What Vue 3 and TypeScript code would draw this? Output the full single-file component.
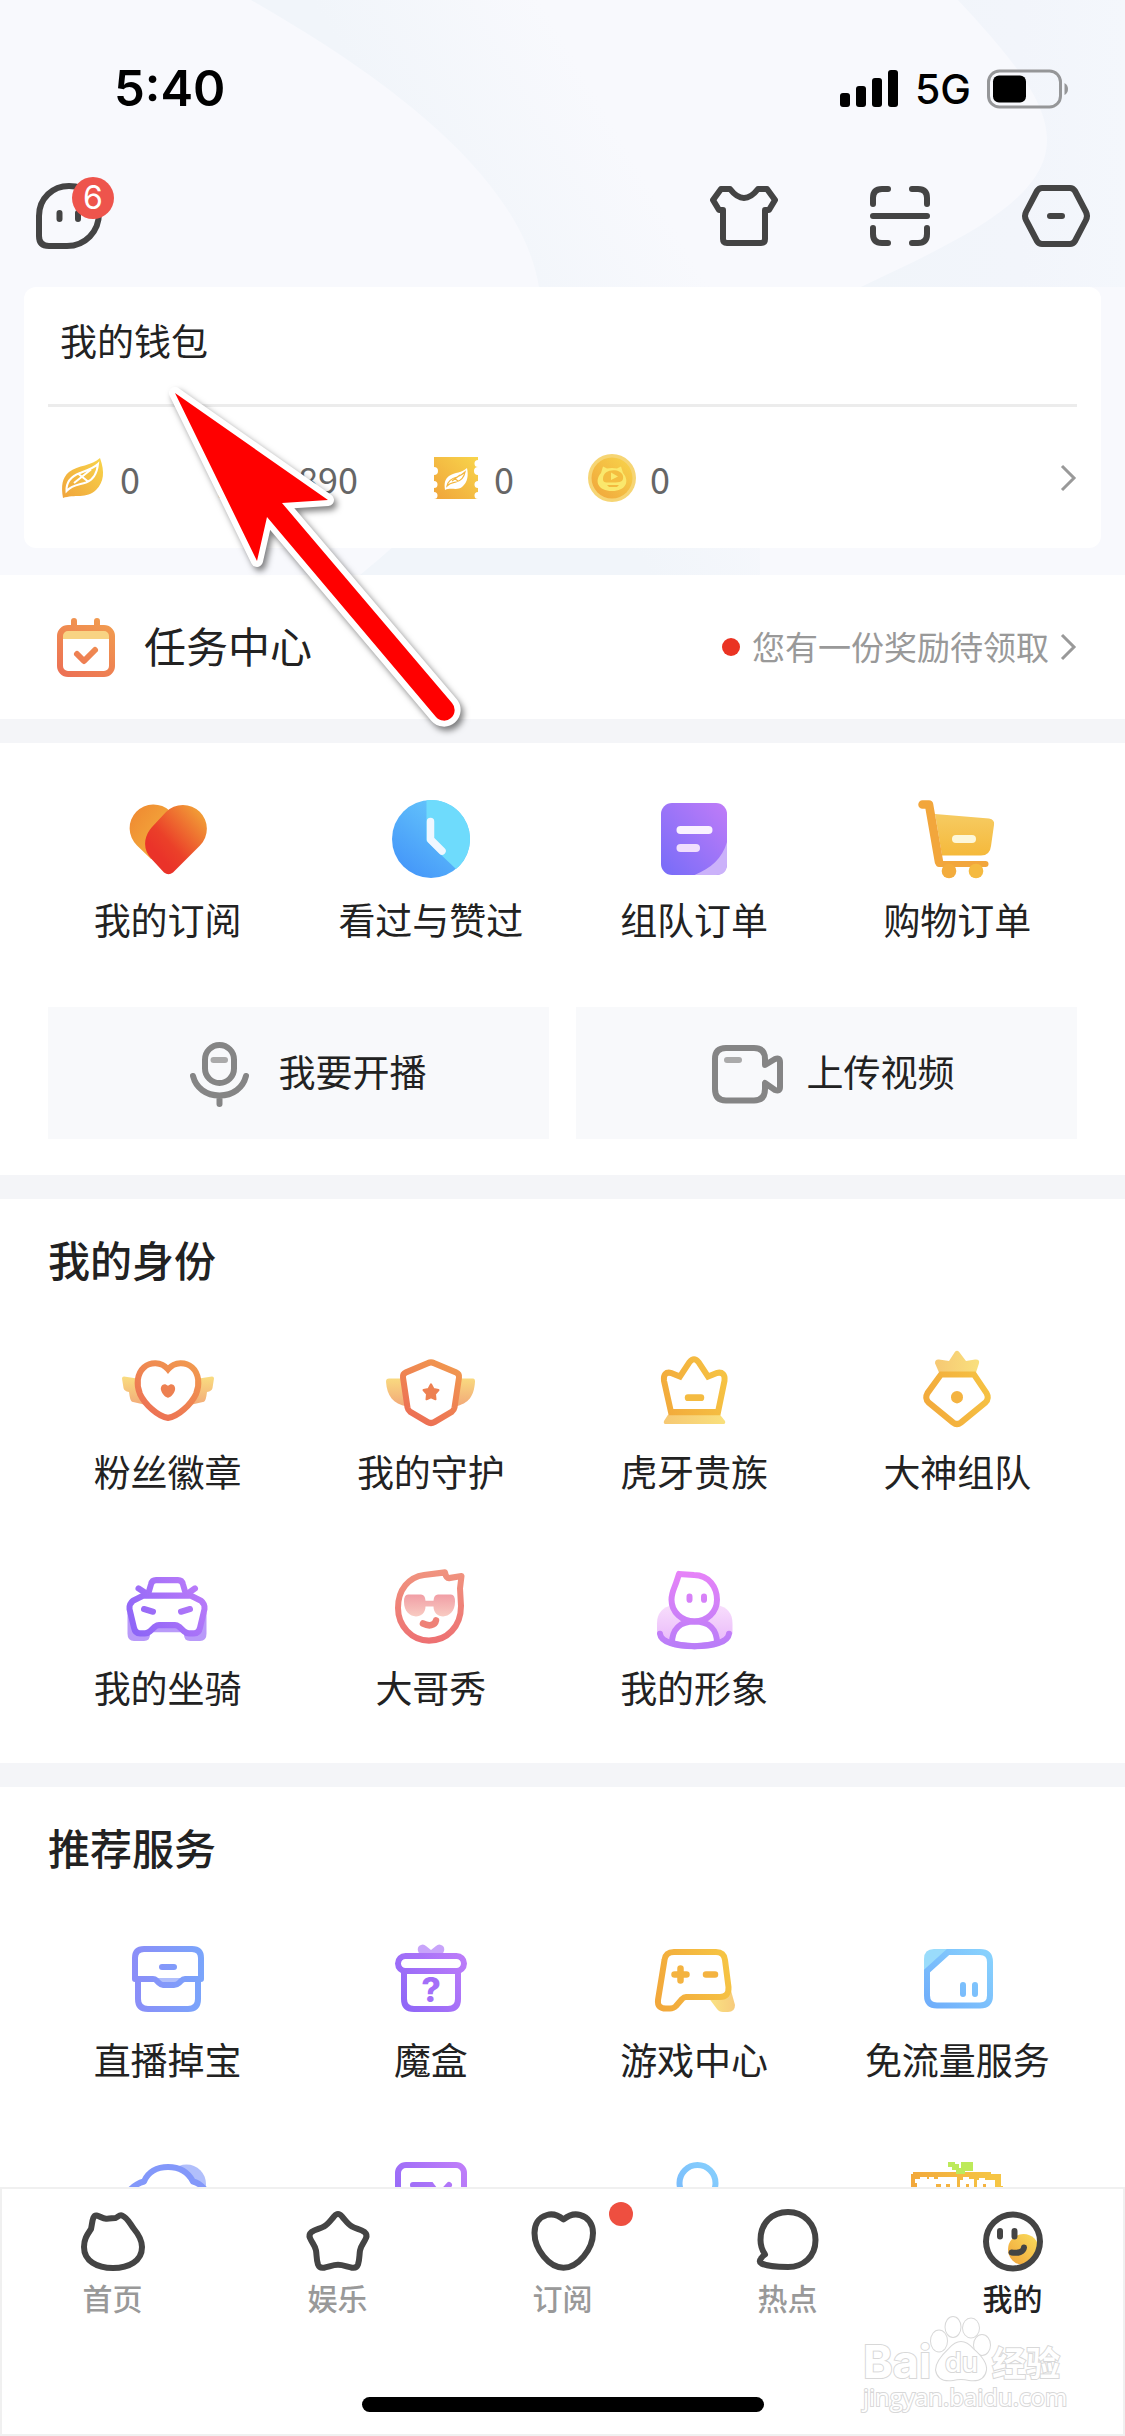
<script setup lang="ts">
interface Entry {
  label?: string
  icon: string
}

interface Balance {
  value: string
  icon: string
  wide?: boolean
}

interface Tab {
  label: string
  icon: string
  dot?: boolean
  active?: boolean
}

const leaf =
  '<path d="M42 4 C47 18 46 28 38 36 C29 45 16 40 5 44 C3 32 4 24 11 18 C20 11 34 12 42 4Z" fill="url(#g-gold)"/><path d="M8.500 37 C8 27 14 22 22 19 C30 16 36 14 40 10 C39 20 35 26 28 28.500 C20 31 14 31 8.500 37Z M16 29 L33 15.500 M20 19.500 L30 27.500" fill="none" stroke="#fff" stroke-width="2"/>'

const balances: Balance[] = [
  { value: '0', icon: leaf },
  { value: '890', icon: leaf, wide: true },
  {
    value: '0',
    icon: '<path d="M2 3 H46 V6 A3.500 3.500 0 0 0 46 13 A3.500 3.500 0 0 0 46 21 V27 A3.500 3.500 0 0 0 46 34 V38 A3.500 3.500 0 0 0 46 45 H2 A3.500 3.500 0 0 0 2 38 V34 A3.500 3.500 0 0 0 2 27 V21 A3.500 3.500 0 0 0 2 13 V6Z" fill="url(#g-gold)"/><path d="M35 14 C36.500 21 36 28 30 33 C25 37 19 33 13 36 C12 29 13 25 17 22 C23 18 30 19 35 14Z" fill="#fff"/><path d="M15 32 C16 27 21 24 25 23 C29 21.500 31 20 33 18 C32 24 28 27 24 28 C20 29 18 29 15 32Z M20 27 L28 21 M22 24 L26 27" fill="none" stroke="#f3b63e" stroke-width="1.200"/>'
  },
  {
    value: '0',
    icon: '<circle cx="24" cy="24" r="24" fill="#f6d574"/><circle cx="24" cy="24" r="20.500" fill="url(#g-gold)"/><path d="M15 12.500 L19 14.500 Q24 13.500 29 14.500 L33 12.500 L35 19 C42 27 38 37 24 37 C10 37 6 27 13 19Z" fill="#fae86c"/><path d="M15 25 C15 14 33 14 35 22 C36 28 32 28.500 25 28.500 C18 28.500 15 29 15 25Z" fill="#f4bd40"/><path d="M23 18.500 L30 22.500 L23 26Z" fill="#fae86c"/><path d="M19 31 H31 L29 33 H21Z" fill="#f3b93e"/>'
  }
]

const shortcuts: Entry[] = [
  {
    label: '我的订阅',
    icon: '<path d="M17 54.500 A23.500 23.500 0 0 1 50 20 L50 60 L31 68Z" fill="url(#g-petal)"/><path d="M46 21 A23.500 23.500 0 0 1 80 54.500 L53 81.500 Q48.500 85 44 81.500 L31.500 68 C24 60 22.500 49 30 38.500 Q31 37 46 21Z" fill="url(#g-heart)"/>'
  },
  {
    label: '看过与赞过',
    icon: '<circle cx="48" cy="48" r="39" fill="url(#g-clock)"/><path d="M43.500 9.300 V50 L73 78 A39 39 0 0 0 43.500 9.300Z" fill="#6edbfc"/><path d="M47.500 30.500 V48.500 L59 60" fill="none" stroke="#f0f7ff" stroke-width="7.500" stroke-linecap="round" stroke-linejoin="round"/>'
  },
  {
    label: '组队订单',
    icon: '<rect x="15" y="12" width="66" height="72" rx="11" fill="url(#g-doc)"/><path d="M81 51 C76 68 65 77 48.500 84 H70 Q81 84 81 73Z" fill="#cbb2fa"/><rect x="30.500" y="35" width="36" height="8" rx="4" fill="#faf2ff"/><rect x="30.500" y="53" width="23.500" height="8" rx="4" fill="#f0defd"/>'
  },
  {
    label: '购物订单',
    icon: '<path d="M26 23 L80 27.500 Q86 28.500 85 34 L82 55 Q81 64.500 72 64.500 H33Z" fill="url(#g-basket)"/><g fill="none" stroke="#f2a63c" stroke-linecap="round" stroke-linejoin="round"><path d="M13.500 13.500 H20 L30 71" stroke-width="8.500"/><path d="M30 73 H76.500" stroke-width="6"/></g><circle cx="40" cy="80" r="7.300" fill="#f3ac3d"/><circle cx="67" cy="80" r="7.300" fill="#f5ba40"/><rect x="43" y="44" width="24" height="8" rx="4" fill="#fdf7d8"/>'
  }
]

const identities: Entry[] = [
  {
    label: '粉丝徽章',
    icon: '<path d="M4 37 L17 39 L24 64 L12 61.500 Q10 60.500 9 52 Q4 51 3.500 48 L2 39 Q2 37 4 37Z M92 37 L79 39 L72 64 L84 61.500 Q86 60.500 87 52 Q92 51 92.500 48 L94 39 Q94 37 92 37Z" fill="url(#g-wing)"/><path d="M48 30 C41 22 30 23 24 28 C17 34 16 45 20 54 C25 64 38 76 48 77 C58 76 71 64 76 54 C80 45 79 34 72 28 C66 23 55 22 48 30Z" fill="#fff" stroke="url(#g-orange)" stroke-width="6"/><path d="M48 46 C44 42 40 46 41 50 C42 54 46 57.500 48 57.500 C50 57.500 54 54 55 50 C56 46 52 42 48 46Z" fill="#ed8051"/>'
  },
  {
    label: '我的守护',
    icon: '<path d="M6 39 H20 L24 66 C10 63 4 56 3 42 Q3 39 6 39Z M90 39 H76 L72 66 C86 63 91 56 92 42 Q92 39 90 39Z" fill="url(#g-wing)"/><path d="M45 24 Q48 22.500 51 24 L73 33 Q76.500 34.500 76 38 L71.500 67 Q71 69.500 69 71 L51.500 81 Q48 83 44.500 81 L27 71 Q25 69.500 24.500 67 L20 38 Q19.500 34.500 23 33Z" fill="#fff" stroke="url(#g-orange)" stroke-width="6"/><path d="M48 44.500 L50.500 49 L55.500 50 L52 54 L52.500 59 L48 57 L43.500 59 L44 54 L40.500 50 L45.500 49Z" fill="#ed8051" stroke="#ed8051" stroke-width="2" stroke-linejoin="round"/>'
  },
  {
    label: '虎牙贵族',
    icon: '<path d="M22 74 H74 L79 80 Q80 83 77 83 H20 Q17 83 18 80Z" fill="url(#g-lemon)"/><path d="M25 71.500 L18 41 Q17 32 25 33.500 L34 37 L43.500 23 Q48 17.500 52.500 23 L62 37 L71 33.500 Q79.500 32 78.500 41 L72 71.500Z" fill="none" stroke="url(#g-yellow)" stroke-width="6"/><path d="M42 57.500 H55" stroke="#f4bb41" stroke-width="6.500" stroke-linecap="round"/>'
  },
  {
    label: '大神组队',
    icon: '<path d="M30 33 L26 24 Q26 20 30 20.500 L40 22 L46 13 Q48 11 50 13 L57 22 L66 20.500 Q71 20 70 24 L67 33Z" fill="url(#g-lemon)"/><path d="M32 35 H65 L77.500 53 Q80.500 58 76.500 62 L52 81.500 Q48 84.500 44 81.500 L19.500 62 Q15.500 58 18.500 53Z" fill="none" stroke="url(#g-yellow)" stroke-width="6"/><circle cx="48" cy="57" r="6" fill="#f4b340"/>'
  },
  {
    label: '我的坐骑',
    icon: '<path d="M7.500 56 L30 74 V78 Q30 84 24 84 H14 Q7.500 84 7.500 77Z M86.500 56 L64 74 V78 Q64 84 70 84 H80 Q86.500 84 86.500 77Z M32 70 H62 V75.500 H32Z" fill="#b99af9"/><g stroke="url(#g-purple)" stroke-width="6" stroke-linecap="round" stroke-linejoin="round" fill="none"><path d="M28 39 L31 29 Q32 25 36 25 H58 Q62 25 63 29 L66 39"/><path d="M18.500 33 L25 37 M75 33 L69 37"/><path d="M23 40 H71 L81 45 Q85 48 84.500 53 L80 71 Q79 76.500 74 76.500 H69 Q66 76.500 64 74.500 L59 70 Q57 68.500 55 68.500 H39 Q37 68.500 35 70 L30 74.500 Q28 76.500 25 76.500 H20 Q15 76.500 14 71 L9.500 53 Q9 48 13 45Z" fill="#fff"/><path d="M24 53 L33 55.500 M70 53 L61 55.500"/></g>'
  },
  {
    label: '大哥秀',
    icon: '<path d="M46 83.500 C29 83.500 15 69.500 15 52 C15 34 26 22 41 20 L62 17.500 Q63 23 66 23 L78.500 21 L77 33 L78 50 C78 70 64 83.500 46 83.500Z" fill="none" stroke="url(#g-coral)" stroke-width="6" stroke-linejoin="round"/><path d="M25 39 H38 Q42 39 42.500 45 H50.500 Q51 39 55 39 H68 Q72 39 72 46 C72 64 50.500 64 50.500 50.500 H42.500 C42.500 64 21 64 21 46 Q21 39 25 39Z" fill="url(#g-shades)"/><path d="M40 67 C46 70 52 69 53 64" fill="none" stroke="#ee8177" stroke-width="6.500" stroke-linecap="round"/>'
  },
  {
    label: '我的形象',
    icon: '<path d="M27 49 H71 Q86.500 52 86.500 67 V77 L72 86 H25 L11 77 V67 Q11 52 27 49Z" fill="url(#g-haze)"/><g fill="#fff" stroke="url(#g-pink)" stroke-width="6" stroke-linejoin="round" stroke-linecap="round"><path d="M26 86 C26 73 34 65 48.500 65 C63 65 71 73 71 86 Q48.500 92 26 86Z"/><path d="M14 77 C15 85 30 89 48.500 89 C67 89 82 85 83 77" fill="none"/><path d="M33 19 L48 20 C63 20 71 32 71 44 C71 56 61 65 48.500 65 C36 65 25.500 56 25.500 44 C25.500 36 29 32 31 25Z"/><path d="M43.500 41 V44 M58 41 V44"/></g>'
  }
]

const services: Entry[] = [
  {
    label: '直播掉宝',
    icon: '<path d="M32 47 H65 L58 54 H40Z" fill="#b1bffb"/><g fill="none" stroke="url(#g-indigo)" stroke-width="6" stroke-linejoin="round" stroke-linecap="round"><path d="M15 48 V27 Q15 18 24 18 H72 Q81 18 81 27 V48 H65 Q63 48 61 50 L59 52 Q57 54 54 54 H43 Q41 54 39 52 L36 49 Q35 48 33 48Z"/><path d="M18 48 V68 Q18 78 28 78 H68 Q78 78 78 68 V48"/><path d="M42 36 H54"/></g>'
  },
  {
    label: '魔盒',
    icon: '<path d="M37 24 Q33 18 36 15 Q40 12 43 15 L48 19 L53 15 Q56 12 60 15 Q63 18 59 24Z" fill="#c8a4fa"/><g fill="none" stroke="url(#g-purple)" stroke-width="6"><rect x="15" y="25" width="66" height="15" rx="7.500"/><path d="M21 41 V68 Q21 78 31 78 H65 Q75 78 75 68 V41"/></g><text x="48" y="71" text-anchor="middle" font-family="Inter, sans-serif" font-weight="800" font-size="34" fill="#a36ff8">?</text>'
  },
  {
    label: '游戏中心',
    icon: '<path d="M62 66 L84 56 L89 74 Q89 81 82 81 H77 Q73 81 71 78Z" fill="url(#g-lemon-r)"/><path d="M28 21 H70 Q78 21 79 29 L82.500 56 Q83 66 74 66 H40 Q38 66 36 68 L30 75 Q27.500 77.500 24 77.500 H20 Q11 77.500 12 69 L18.500 29 Q19.500 21 28 21Z" fill="#fff" stroke="url(#g-yellow)" stroke-width="6"/><path d="M28.500 43.500 H40.500 M34.500 37.500 V49.500 M60 43.500 H69" stroke="#f4b340" stroke-width="6.500" stroke-linecap="round"/>'
  },
  {
    label: '免流量服务',
    icon: '<path d="M15 42 V28 Q15 18 25 18 H42Z" fill="#9adcfb"/><g fill="none" stroke="url(#g-sky)" stroke-width="6" stroke-linecap="round"><path d="M39 21 H71 Q81 21 81 31 V64.500 Q81 74.500 71 74.500 H28 Q18 74.500 18 64.500 V40Z"/><path d="M54 54 V63 M66 54 V63"/></g>'
  },
  {
    icon: '<circle cx="66.500" cy="37" r="19.500" fill="#b1bffb"/><path d="M8 45 Q15 37 24 34.500 C28 25 37 20 48 20 C59 20 68 25 73 34.500 Q80 36 87 45" fill="#fff" stroke="#8398fa" stroke-width="6" stroke-linejoin="round"/>'
  },
  {
    icon: '<g fill="none" stroke="url(#g-purple)" stroke-width="6" stroke-linecap="round"><rect x="15" y="18" width="66" height="52" rx="8"/><path d="M30 38 H48 L54 46 M66 38 L58 47"/></g>'
  },
  {
    icon: '<circle cx="51.500" cy="36" r="18" fill="none" stroke="url(#g-sky)" stroke-width="6"/>'
  },
  {
    icon: '<path d="M4 25 H82 V27 H92 V39 H94 V53 H2 V27 H4Z" fill="url(#g-yellow)"/><path d="M8 53 V36 H6 V32 H11 V30 H18 V32 H20 V30 H25 V32 H29 V30 H48 V53Z M51 53 V33 H54 V30 H60 V32 H65 V53Z M68 53 V33 H70 V31 H76 V33 H86 V53Z" fill="#fff"/><path d="M27 37 H32 V43 H27Z M37 37 H41 V43 H37Z M57 37 H60 V43 H57Z M74 37 H77 V43 H74Z" fill="#f4b340"/><path d="M39 15 H46 V17 H50 V21 H52 V15 H64 V24 H56 V27 H47 V23 H43 V20 H39Z" fill="#bdea5a"/>'
  }
]

const tabs: Tab[] = [
  {
    label: '首页',
    icon: '<path d="M14 24 C15.500 17 15.500 10 19.500 10.500 C22 11 26 13.500 29 13.700 C32 14 36 13 38.500 13 C41 12 42.500 9.500 45 10.500 C51 13 53 19 57 24 C62 30 65 35 65 42 C65 56 52 63 36 63 C20 63 7 56 7 42 C7 34 10 30 14 24Z"/>'
  },
  {
    label: '娱乐',
    icon: '<path d="M32 11.500 Q36 6.500 40 11.500 C44 16 46 19.500 50 21.500 C54 24 58 24 62.500 27 Q65.500 29.500 64 33 C62 38 59 40 58 45.500 C57.200 50 57.800 54 56 59.500 Q54.500 63.500 50 62.700 C45 61.800 41 59.800 36 59.800 C31 59.800 27 61.800 22 62.700 Q17.500 63.500 16 59.500 C14.200 54 14.800 50 14 45.500 C13 40 10 38 8 33 Q6.500 29.500 9.500 27 C14 24 18 24 22 21.500 C26 19.500 28 16 32 11.500Z"/>'
  },
  {
    label: '订阅',
    dot: true,
    icon: '<path d="M36.500 14.500 C31 10 25 8.500 20 10 C11 12.500 7.500 20 7.500 28 C7.500 44 22 62.700 36.500 62.700 C51 62.700 66 44 66 28 C66 20 62 12.500 53 10 C48 8.500 42 10 36.500 14.500Z"/>'
  },
  {
    label: '热点',
    icon: '<path d="M13 49.500 C10 45 8.500 40 8.500 35 C8.500 18 20 7 36 7 C52 7 63.500 19 63.500 35 C63.500 52 51 62 36 62 C27 62 15 61.500 9.500 58.500 C7 57 7.500 55.500 9 53.500 Q10.500 51 13 49.500Z"/>'
  },
  {
    label: '我的',
    active: true,
    icon: '<circle cx="46.500" cy="44.500" r="15.500" fill="url(#g-cheek)" stroke="none"/><path fill-rule="evenodd" d="M0 0 H72 V72 H0Z M36 9.500 A27 27 0 1 0 36 63.500 A27 27 0 1 0 36 9.500Z" fill="#fff" stroke="none"/><circle cx="36" cy="36.500" r="27"/><path d="M23 26 V31.500 M37.500 26 V31.500 M34.500 47.500 C41 48.500 46.500 47 47 42.500"/>'
  }
]
</script>

<template>
  <div class="page">
    <svg class="defs" width="0" height="0" aria-hidden="true">
      <defs>
        <linearGradient id="g-gold" x1="0" y1="1" x2="1" y2="0"><stop offset="0" stop-color="#f0a43b" /><stop offset="1" stop-color="#f8d54b" /></linearGradient>
        <linearGradient id="g-petal" x1="0" y1="0" x2="1" y2="1"><stop offset="0" stop-color="#ef8630" /><stop offset="1" stop-color="#f4b640" /></linearGradient>
        <linearGradient id="g-heart" x1=".3" y1=".8" x2="1" y2="0.1"><stop offset="0" stop-color="#ea3329" /><stop offset=".25" stop-color="#eb4029" /><stop offset="1" stop-color="#f2a838" /></linearGradient>
        <linearGradient id="g-clock" x1="0" y1="1" x2=".8" y2="0"><stop offset="0" stop-color="#3f8ff9" /><stop offset="1" stop-color="#69ccfb" /></linearGradient>
        <linearGradient id="g-doc" x1="0" y1="1" x2="1" y2="0"><stop offset="0" stop-color="#766cf8" /><stop offset="1" stop-color="#c07cf8" /></linearGradient>
        <linearGradient id="g-basket" x1="0" y1="0" x2="0" y2="1"><stop offset="0" stop-color="#f6cb62" /><stop offset="1" stop-color="#f5b93b" /></linearGradient>
        <linearGradient id="g-wing" gradientUnits="userSpaceOnUse" x1="0" y1="38" x2="0" y2="66"><stop offset="0" stop-color="#f9db80" /><stop offset="1" stop-color="#f2a878" /></linearGradient>
        <linearGradient id="g-orange" gradientUnits="userSpaceOnUse" x1="30" y1="80" x2="66" y2="20"><stop offset="0" stop-color="#ec6e55" /><stop offset="1" stop-color="#f1994f" /></linearGradient>
        <linearGradient id="g-yellow" gradientUnits="userSpaceOnUse" x1="10" y1="60" x2="86" y2="36"><stop offset="0" stop-color="#f2a83b" /><stop offset="1" stop-color="#f6c544" /></linearGradient>
        <linearGradient id="g-lemon" x1="0" y1="0" x2="1" y2="0"><stop offset="0" stop-color="#f6c873" /><stop offset="1" stop-color="#f9e07d" /></linearGradient>
        <linearGradient id="g-lemon-r" x1="0" y1="0" x2="1" y2="0"><stop offset="0" stop-color="#fae483" /><stop offset="1" stop-color="#f7cb7c" /></linearGradient>
        <linearGradient id="g-purple" gradientUnits="userSpaceOnUse" x1="12" y1="80" x2="84" y2="24"><stop offset="0" stop-color="#8a64f7" /><stop offset="1" stop-color="#be7df9" /></linearGradient>
        <linearGradient id="g-coral" gradientUnits="userSpaceOnUse" x1="0" y1="15" x2="0" y2="86"><stop offset="0" stop-color="#f0947f" /><stop offset="1" stop-color="#ed7072" /></linearGradient>
        <linearGradient id="g-shades" x1="0" y1="0" x2="0" y2="1"><stop offset="0" stop-color="#f19ea5" /><stop offset="1" stop-color="#f8cbc2" /></linearGradient>
        <linearGradient id="g-haze" x1="0" y1="0" x2="0" y2="1"><stop offset="0" stop-color="#f8defc" /><stop offset="1" stop-color="#e9b9fa" /></linearGradient>
        <linearGradient id="g-pink" gradientUnits="userSpaceOnUse" x1="0" y1="16" x2="0" y2="90"><stop offset="0" stop-color="#e783f8" /><stop offset="1" stop-color="#b97df8" /></linearGradient>
        <linearGradient id="g-indigo" gradientUnits="userSpaceOnUse" x1="12" y1="0" x2="84" y2="0"><stop offset="0" stop-color="#8b8df8" /><stop offset="1" stop-color="#7aa5fb" /></linearGradient>
        <linearGradient id="g-sky" gradientUnits="userSpaceOnUse" x1="20" y1="78" x2="76" y2="20"><stop offset="0" stop-color="#6fadfb" /><stop offset="1" stop-color="#88d1fd" /></linearGradient>
        <linearGradient id="g-cheek" x1="0" y1="1" x2="1" y2="0"><stop offset="0" stop-color="#f0a23a" /><stop offset="1" stop-color="#fadf5c" /></linearGradient>
        <linearGradient id="g-band" gradientUnits="userSpaceOnUse" x1="400" y1="150" x2="570" y2="50"><stop offset="0" stop-color="#f1f5fa" /><stop offset="1" stop-color="#f1f5fa" stop-opacity="0" /></linearGradient>
        <linearGradient id="g-band-r" x1="0" y1="0" x2="1" y2="0"><stop offset="0" stop-color="#f1f5fa" /><stop offset=".6" stop-color="#f2f5fb" /><stop offset="1" stop-color="#f4f7fc" /></linearGradient>
      </defs>
    </svg>

    <main class="content">
      <header class="top">
        <svg class="backdrop" viewBox="0 0 1125 575" preserveAspectRatio="none" aria-hidden="true">
          <path d="M251 0 C370 68 520 170 539 287 Q550 420 360 575 H760 V0Z" fill="url(#g-band)" />
          <path d="M958 0 C1010 56 1047 100 1047 140 C1047 200 960 240 861 287 H1125 V0Z" fill="url(#g-band-r)" />
        </svg>

        <div class="status">
          <span class="time">5:40</span>
          <div class="signals">
            <svg width="60" height="40" viewBox="0 0 60 40" aria-hidden="true">
              <rect x="1" y="24" width="10" height="14" rx="3" /><rect x="17" y="17" width="10" height="21" rx="3" />
              <rect x="33" y="9" width="10" height="29" rx="3" /><rect x="49" y="1" width="10" height="37" rx="3" />
            </svg>
            <span class="network">5G</span>
            <svg width="82" height="40" viewBox="0 0 82 40" aria-hidden="true">
              <rect x="1.500" y="2" width="72" height="36" rx="11" fill="none" stroke="#959698" stroke-width="3" />
              <rect x="6" y="6.500" width="33" height="27" rx="6" />
              <path d="M77.500 14 Q81 16 81 20 Q81 24 77.500 26Z" fill="#959698" />
            </svg>
          </div>
        </div>

        <div class="toolbar">
          <button type="button" class="tool">
            <svg class="line" viewBox="0 0 72 72"><path d="M6 36 C6 18 20 6 36 6 C54 6 66 18 66 33 C66 52 52 66 34 66 H16 Q6 66 6 56Z M26.500 33 V39 M45 33 V39" /></svg>
            <span class="badge">6</span>
          </button>
          <div class="tools">
            <button type="button" class="tool"><svg class="line" viewBox="0 0 72 72"><path d="M13 9 H22 Q29 18 36 18 Q43 18 50 9 H59 L67 20 L61 30 H57 V59 Q57 63 53 63 H19 Q15 63 15 59 V30 H11 L5 20Z" /></svg></button>
            <button type="button" class="tool"><svg class="line" viewBox="0 0 72 72"><path d="M9 24 V18 Q9 9 18 9 H24 M48 9 H54 Q63 9 63 18 V24 M63 48 V54 Q63 63 54 63 H48 M24 63 H18 Q9 63 9 54 V48 M9 36 H63" /></svg></button>
            <button type="button" class="tool"><svg class="line" viewBox="0 0 72 72"><path d="M22 8 H50 Q53 8 55 11 L66 32 Q68 36 66 40 L55 61 Q53 64 50 64 H22 Q19 64 17 61 L6 40 Q4 36 6 32 L17 11 Q19 8 22 8Z M30 36 H42" /></svg></button>
          </div>
        </div>

        <section class="wallet">
          <h2 class="wallet-title">我的钱包</h2>
          <a class="balances" href="#wallet">
            <span v-for="(b, i) in balances" :key="i" class="balance">
              <svg width="48" height="48" viewBox="0 0 48 48" aria-hidden="true" v-html="b.icon"></svg>
              <span class="amount" :class="{ wide: b.wide }">{{ b.value }}</span>
            </span>
            <svg class="chevron" width="18" height="30" viewBox="0 0 18 30"><path d="M3 3 L15 15 L3 27" /></svg>
          </a>
        </section>
      </header>

      <a class="task" href="#tasks">
        <svg width="72" height="72" viewBox="0 0 72 72" aria-hidden="true">
          <rect x="12" y="19" width="48" height="9" fill="#f8d383" />
          <g fill="none" stroke="url(#g-orange)" stroke-width="6" stroke-linecap="round" stroke-linejoin="round">
            <rect x="10" y="17" width="52" height="46" rx="8" />
            <path d="M24 10 V16 M47 10 V16 M27 43 L34 50 L45 39" />
          </g>
        </svg>
        <span class="task-name">任务中心</span>
        <span class="dot"></span>
        <span class="task-note">您有一份奖励待领取</span>
        <svg class="chevron" width="18" height="30" viewBox="0 0 18 30"><path d="M3 3 L15 15 L3 27" /></svg>
      </a>

      <section class="panel main-entries">
        <div class="grid">
          <a v-for="s in shortcuts" :key="s.label" class="entry" href="#entry">
            <svg width="96" height="96" viewBox="0 0 96 96" aria-hidden="true" v-html="s.icon"></svg>
            <span>{{ s.label }}</span>
          </a>
        </div>
        <div class="actions">
          <button type="button" class="action">
            <svg width="84" height="84" viewBox="0 0 84 84" aria-hidden="true">
              <g fill="none" stroke="#858585" stroke-width="6" stroke-linecap="round">
                <rect x="28" y="14" width="29" height="38" rx="14.500" />
                <path d="M16 45 C19 57 29 64.500 42.500 64.500 C56 64.500 66 57 69 45 M42.500 65 V73" />
                <path d="M36.500 29 H48" stroke="#aaa" />
              </g>
            </svg>
            <span>我要开播</span>
          </button>
          <button type="button" class="action">
            <svg width="84" height="84" viewBox="0 0 84 84" aria-hidden="true">
              <g fill="none" stroke="#858585" stroke-width="6" stroke-linecap="round" stroke-linejoin="round">
                <path d="M60 34 L70 28 Q75 26 75 31 V56 Q75 61 70 59 L60 52 V58 Q60 69.500 49 69.500 H21 Q10 69.500 10 58 V28 Q10 17 21 17 H49 Q60 17 60 28Z" />
                <path d="M22 29 H34" stroke="#aaa" />
              </g>
            </svg>
            <span>上传视频</span>
          </button>
        </div>
      </section>

      <section class="panel">
        <h2 class="panel-title">我的身份</h2>
        <div class="grid">
          <a v-for="s in identities" :key="s.label" class="entry" href="#entry">
            <svg width="96" height="96" viewBox="0 4.500 96 93" preserveAspectRatio="none" aria-hidden="true" v-html="s.icon"></svg>
            <span>{{ s.label }}</span>
          </a>
        </div>
      </section>

      <section class="panel">
        <h2 class="panel-title">推荐服务</h2>
        <div class="grid">
          <a v-for="(s, i) in services" :key="i" class="entry" href="#entry">
            <svg width="96" height="96" viewBox="0 0 96 96" aria-hidden="true" v-html="s.icon"></svg>
            <span v-if="s.label">{{ s.label }}</span>
          </a>
        </div>
      </section>
    </main>

    <nav class="tabbar">
      <div class="tabs">
        <a v-for="t in tabs" :key="t.label" class="tab" :class="{ active: t.active }" href="#tab">
          <svg class="line" viewBox="0 0 72 72" aria-hidden="true" v-html="t.icon"></svg>
          <span>{{ t.label }}</span>
          <i v-if="t.dot" class="tab-dot"></i>
        </a>
      </div>
      <div class="home-bar"></div>

      <svg class="watermark" width="216" height="110" viewBox="0 0 216 110">
        <g fill="#fff" stroke="#d8d8d8" stroke-width="2" paint-order="stroke">
          <text x="8" y="60" font-size="45" font-weight="700" font-family="Inter, sans-serif">Bai</text>
          <ellipse cx="84" cy="23" rx="8" ry="10.500" /><ellipse cx="98" cy="9" rx="7.500" ry="10" />
          <ellipse cx="116" cy="10" rx="8" ry="9.500" /><ellipse cx="127" cy="27" rx="8" ry="10" />
          <path d="M94 31 Q106 17 118 31 Q132 43 131 52 Q129 64 114 62 Q106 60 98 62 Q83 64 81 52 Q81 43 94 31Z" />
          <text x="90" y="54" font-size="27" font-weight="500" font-family="Inter, sans-serif">du</text>
          <text x="137" y="58" font-size="34" font-weight="700" font-family="'Noto Sans CJK SC', sans-serif">经验</text>
          <text x="8" y="88" font-size="24" font-family="'Open Sans', sans-serif">jingyan.baidu.com</text>
        </g>
      </svg>
    </nav>

    <svg class="pointer" width="310" height="360" viewBox="0 0 310 360" aria-hidden="true">
      <path
        d="M15 13 L168 120 L122 123 L292 323 A10.500 10.500 0 0 1 276 337 L107 137 L97 181Z"
        fill="#f00" stroke="#fff" stroke-width="12" stroke-linejoin="round" paint-order="stroke"
      />
    </svg>
  </div>
</template>

<style>
body {
  margin: 0;
}
</style>

<style scoped>
.page {
  position: relative;
  display: flex;
  flex-direction: column;
  height: 100vh;
  overflow: hidden;
  background: #f4f5f8;
  color: #222;
  font-family: "Noto Sans CJK SC", sans-serif;
  font-size: 37px;
  line-height: 48px;
}

.defs {
  position: absolute;
}

.content {
  flex: 1;
  min-height: 0;
  overflow: hidden;
}

a {
  color: inherit;
  text-decoration: none;
}

button {
  padding: 0;
  border: 0;
  background: none;
  color: inherit;
  font: inherit;
}

h2 {
  margin: 0;
}

.line {
  display: block;
  width: 72px;
  height: 72px;
  fill: none;
  stroke: #444;
  stroke-width: 6;
  stroke-linecap: round;
  stroke-linejoin: round;
}

.chevron {
  fill: none;
  stroke: #999;
  stroke-width: 3;
}

.top {
  position: relative;
  padding-bottom: 27px;
  background: #f8f9fd;
}

.backdrop {
  position: absolute;
  inset: 0;
  width: 100%;
  height: 100%;
}

.status {
  position: relative;
  display: flex;
  align-items: center;
  justify-content: space-between;
  height: 88px;
  padding: 45px 56px 47px 114px;
  color: #000;
  font-family: Inter, sans-serif;
}

.time {
  font-size: 49px;
  font-weight: 600;
}

.signals {
  display: flex;
  align-items: center;
  gap: 16px;
}

.network {
  font-size: 41px;
  font-weight: 500;
}

.toolbar {
  position: relative;
  display: flex;
  justify-content: space-between;
  padding: 0 33px 35px;
}

.tools {
  display: flex;
  gap: 84px;
}

.tool {
  position: relative;
}

.badge {
  position: absolute;
  top: -3px;
  right: -9px;
  width: 42px;
  height: 42px;
  border-radius: 50%;
  background: #ee544c;
  color: #fff;
  font-family: Inter, sans-serif;
  font-size: 32px;
  line-height: 42px;
  text-align: center;
}

.wallet {
  position: relative;
  margin: 0 24px;
  padding: 0 24px;
  border-radius: 12px;
  background: #fff;
}

.wallet-title {
  padding: 29px 12px 40px;
  border-bottom: 3px solid #ececec;
  font-size: 37px;
  font-weight: 400;
}

.balances {
  display: flex;
  align-items: center;
  gap: 74px;
  padding: 47px 0 46px 10px;
  color: #666;
  font-size: 36px;
}

.balance {
  display: flex;
  align-items: center;
  gap: 14px;
}

.amount.wide {
  min-width: 82px;
  text-align: right;
}

.balances .chevron {
  margin-left: auto;
}

.task {
  display: flex;
  align-items: center;
  padding: 36px 48px 36px 50px;
  background: #fff;
}

.task-name {
  margin: 0 auto 4px 22px;
  font-size: 42px;
}

.dot {
  width: 18px;
  height: 18px;
  margin-right: 12px;
  border-radius: 50%;
  background: #ea3323;
}

.task-note {
  margin: 0 10px 2px 0;
  color: #999;
  font-size: 33px;
}

.panel {
  margin-top: 24px;
  padding: 30px 36px 52px;
  background: #fff;
}

.panel.main-entries {
  padding: 48px 36px 36px;
}

.panel-title {
  padding: 0 12px;
  margin-bottom: 54px;
  font-size: 42px;
  font-weight: 500;
  line-height: 60px;
}

.grid {
  display: grid;
  grid-template-columns: repeat(4, 1fr);
  row-gap: 64px;
}

.entry {
  display: flex;
  flex-direction: column;
  align-items: center;
  gap: 8px;
}

.actions {
  display: grid;
  grid-template-columns: 1fr 1fr;
  gap: 27px;
  margin: 64px 12px 0;
}

.action {
  display: flex;
  align-items: center;
  justify-content: center;
  gap: 18px;
  height: 132px;
  padding-left: 6px;
  background: #f8f9fb;
}

.action span {
  margin-bottom: 4px;
}

.tabbar {
  position: relative;
  padding: 16px 0 22px;
  border: 2px solid #f0f0f0;
  background: #fff;
}

.tabs {
  display: flex;
  margin: 0 -2px;
}

.tab {
  position: relative;
  flex: 1;
  display: flex;
  flex-direction: column;
  align-items: center;
  color: #999;
  font-size: 30px;
  font-weight: 500;
  line-height: 40px;
}

.tab.active {
  color: #222;
}

.tab-dot {
  position: absolute;
  top: -3px;
  left: calc(50% + 46px);
  width: 24px;
  height: 24px;
  border-radius: 50%;
  background: #ee4f40;
}

.home-bar {
  width: 402px;
  height: 15px;
  margin: 80px auto 0;
  border-radius: 8px;
  background: #000;
}

.watermark {
  position: absolute;
  right: 52px;
  bottom: 6px;
  overflow: visible;
}

.pointer {
  position: absolute;
  top: 380px;
  left: 160px;
  filter: drop-shadow(3px 4px 3px rgba(0, 0, 0, 0.5));
}
</style>
